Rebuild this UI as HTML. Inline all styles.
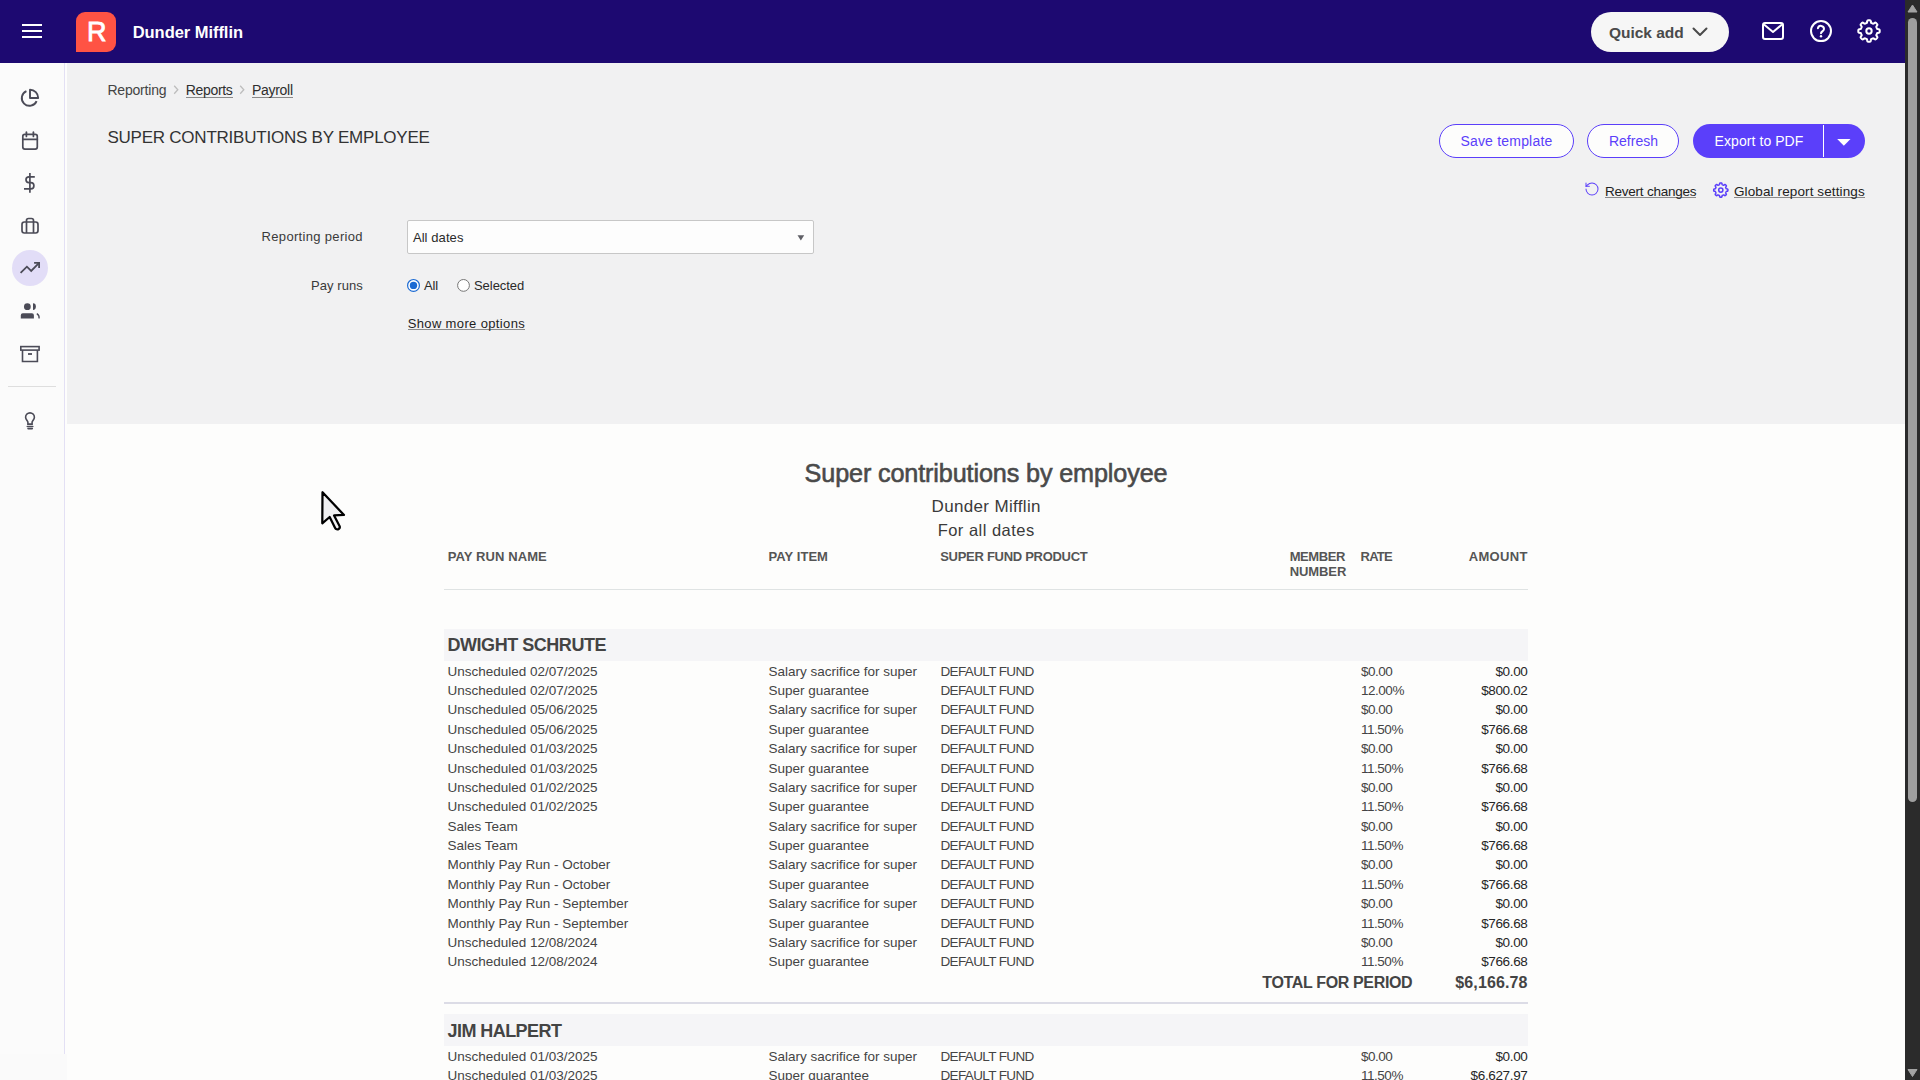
<!DOCTYPE html>
<html><head><meta charset="utf-8">
<style>
*{box-sizing:border-box}
html,body{margin:0;padding:0;width:1920px;height:1080px;overflow:hidden;background:#fdfdfc;font-family:"Liberation Sans",sans-serif;}
.a{position:absolute;white-space:nowrap;line-height:1}
.ic{position:absolute;display:block}
</style></head><body>
<div class="ic" style="left:0;top:0;width:1905px;height:63px;background:#1d0971"></div>
<div class="ic" style="left:22px;top:24px;width:20px;height:2px;background:#fff"></div>
<div class="ic" style="left:22px;top:30px;width:20px;height:2px;background:#fff"></div>
<div class="ic" style="left:22px;top:36px;width:20px;height:2px;background:#fff"></div>
<div class="ic" style="left:76px;top:12px;width:40px;height:40px;background:#ff5344;border-radius:9px 9px 9px 0"></div>
<div class="ic" style="left:1591px;top:12px;width:138px;height:40px;background:#f6f6f6;border-radius:20px"></div>
<svg class="ic" style="left:1690px;top:24px" width="20" height="16" viewBox="0 0 20 16"><polyline points="3.5,4.5 10,11 16.5,4.5" fill="none" stroke="#4a4a4a" stroke-width="2" stroke-linecap="round" stroke-linejoin="round"/></svg>
<svg class="ic" style="left:1760px;top:20px" width="26" height="22" viewBox="0 0 26 22"><rect x="3" y="3" width="20" height="16" rx="2" fill="none" stroke="#fff" stroke-width="2"/><polyline points="4,4.5 13,12 22,4.5" fill="none" stroke="#fff" stroke-width="2" stroke-linejoin="round"/></svg>
<svg class="ic" style="left:1807px;top:17px" width="28" height="28" viewBox="0 0 28 28"><circle cx="14" cy="14.1" r="10" fill="none" stroke="#fff" stroke-width="2"/><path d="M10.9 11.2a3.1 3.1 0 0 1 6.1 0.8c0 2.1-3 2.6-3 4.3" fill="none" stroke="#fff" stroke-width="2" stroke-linecap="round"/><circle cx="14" cy="19.2" r="1.2" fill="#fff"/></svg>
<svg class="ic" style="left:1855px;top:17px" width="28" height="28" viewBox="0 0 28 28"><path d="M14.00 3.30 L14.28 3.30 L14.56 3.32 L14.84 3.35 L15.11 3.40 L15.38 3.50 L15.62 3.75 L15.80 4.30 L15.90 5.07 L16.01 5.62 L16.18 5.88 L16.37 6.01 L16.57 6.09 L16.77 6.17 L16.97 6.25 L17.18 6.33 L17.38 6.42 L17.57 6.50 L17.77 6.59 L17.98 6.67 L18.20 6.72 L18.50 6.65 L18.97 6.34 L19.59 5.87 L20.10 5.60 L20.45 5.60 L20.71 5.71 L20.94 5.87 L21.16 6.05 L21.36 6.24 L21.57 6.43 L21.76 6.64 L21.95 6.84 L22.13 7.06 L22.29 7.29 L22.40 7.55 L22.40 7.90 L22.13 8.41 L21.66 9.03 L21.35 9.50 L21.28 9.80 L21.33 10.02 L21.41 10.23 L21.50 10.43 L21.58 10.62 L21.67 10.82 L21.75 11.03 L21.83 11.23 L21.91 11.43 L21.99 11.63 L22.12 11.82 L22.38 11.99 L22.93 12.10 L23.70 12.20 L24.25 12.38 L24.50 12.62 L24.60 12.89 L24.65 13.16 L24.68 13.44 L24.70 13.72 L24.70 14.00 L24.70 14.28 L24.68 14.56 L24.65 14.84 L24.60 15.11 L24.50 15.38 L24.25 15.62 L23.70 15.80 L22.93 15.90 L22.38 16.01 L22.12 16.18 L21.99 16.37 L21.91 16.57 L21.83 16.77 L21.75 16.97 L21.67 17.18 L21.58 17.38 L21.50 17.57 L21.41 17.77 L21.33 17.98 L21.28 18.20 L21.35 18.50 L21.66 18.97 L22.13 19.59 L22.40 20.10 L22.40 20.45 L22.29 20.71 L22.13 20.94 L21.95 21.16 L21.76 21.36 L21.57 21.57 L21.36 21.76 L21.16 21.95 L20.94 22.13 L20.71 22.29 L20.45 22.40 L20.10 22.40 L19.59 22.13 L18.97 21.66 L18.50 21.35 L18.20 21.28 L17.98 21.33 L17.77 21.41 L17.57 21.50 L17.38 21.58 L17.18 21.67 L16.97 21.75 L16.77 21.83 L16.57 21.91 L16.37 21.99 L16.18 22.12 L16.01 22.38 L15.90 22.93 L15.80 23.70 L15.62 24.25 L15.38 24.50 L15.11 24.60 L14.84 24.65 L14.56 24.68 L14.28 24.70 L14.00 24.70 L13.72 24.70 L13.44 24.68 L13.16 24.65 L12.89 24.60 L12.62 24.50 L12.38 24.25 L12.20 23.70 L12.10 22.93 L11.99 22.38 L11.82 22.12 L11.63 21.99 L11.43 21.91 L11.23 21.83 L11.03 21.75 L10.82 21.67 L10.62 21.58 L10.43 21.50 L10.23 21.41 L10.02 21.33 L9.80 21.28 L9.50 21.35 L9.03 21.66 L8.41 22.13 L7.90 22.40 L7.55 22.40 L7.29 22.29 L7.06 22.13 L6.84 21.95 L6.64 21.76 L6.43 21.57 L6.24 21.36 L6.05 21.16 L5.87 20.94 L5.71 20.71 L5.60 20.45 L5.60 20.10 L5.87 19.59 L6.34 18.97 L6.65 18.50 L6.72 18.20 L6.67 17.98 L6.59 17.77 L6.50 17.57 L6.42 17.38 L6.33 17.18 L6.25 16.97 L6.17 16.77 L6.09 16.57 L6.01 16.37 L5.88 16.18 L5.62 16.01 L5.07 15.90 L4.30 15.80 L3.75 15.62 L3.50 15.38 L3.40 15.11 L3.35 14.84 L3.32 14.56 L3.30 14.28 L3.30 14.00 L3.30 13.72 L3.32 13.44 L3.35 13.16 L3.40 12.89 L3.50 12.62 L3.75 12.38 L4.30 12.20 L5.07 12.10 L5.62 11.99 L5.88 11.82 L6.01 11.63 L6.09 11.43 L6.17 11.23 L6.25 11.03 L6.33 10.82 L6.42 10.62 L6.50 10.43 L6.59 10.23 L6.67 10.02 L6.72 9.80 L6.65 9.50 L6.34 9.03 L5.87 8.41 L5.60 7.90 L5.60 7.55 L5.71 7.29 L5.87 7.06 L6.05 6.84 L6.24 6.64 L6.43 6.43 L6.64 6.24 L6.84 6.05 L7.06 5.87 L7.29 5.71 L7.55 5.60 L7.90 5.60 L8.41 5.87 L9.03 6.34 L9.50 6.65 L9.80 6.72 L10.02 6.67 L10.23 6.59 L10.43 6.50 L10.62 6.42 L10.82 6.33 L11.03 6.25 L11.23 6.17 L11.43 6.09 L11.63 6.01 L11.82 5.88 L11.99 5.62 L12.10 5.07 L12.20 4.30 L12.38 3.75 L12.62 3.50 L12.89 3.40 L13.16 3.35 L13.44 3.32 L13.72 3.30Z" fill="none" stroke="#fff" stroke-width="2" stroke-linejoin="round"/><circle cx="14" cy="14" r="2.7" fill="none" stroke="#fff" stroke-width="2"/></svg>
<div class="ic" style="left:0;top:63px;width:65px;height:991px;background:#fbfbfb;border-right:1px solid #e3e0f4"></div>
<div class="ic" style="left:0;top:1054px;width:67px;height:26px;background:#fafafa"></div>
<div class="ic" style="left:67px;top:63px;width:1838px;height:361px;background:#f1f1f2"></div>
<svg class="ic" style="left:17px;top:85px" width="26" height="26" viewBox="0 0 26 26"><g fill="none" stroke="#4b4b57" stroke-width="1.9" stroke-linejoin="round"><path d="M19.59 16.1A7.7 7.7 0 1 1 9.42 6.04"/><path d="M21.2 13A8.2 8.2 0 0 0 13 4.8V13z"/></g></svg>
<svg class="ic" style="left:17px;top:128px" width="26" height="26" viewBox="0 0 26 26"><g fill="none" stroke="#4b4b57" stroke-width="1.7" stroke-linecap="round"><rect x="5.8" y="6.4" width="14.5" height="14.7" rx="2"/><line x1="5.8" y1="11.4" x2="20.3" y2="11.4"/><line x1="9.4" y1="4.2" x2="9.4" y2="8.4"/><line x1="16.4" y1="4.2" x2="16.4" y2="8.4"/></g></svg>
<svg class="ic" style="left:17px;top:170px" width="26" height="26" viewBox="0 0 26 26"><g fill="none" stroke="#4b4b57" stroke-width="1.7"><line x1="12.9" y1="3" x2="12.9" y2="22.7"/><path d="M17.8 6.9H12a3 2.85 0 0 0 0 5.7h1.8a3.1 3.1 0 0 1 0 6.2H7"/></g></svg>
<svg class="ic" style="left:17px;top:213px" width="26" height="26" viewBox="0 0 26 26"><g fill="none" stroke="#4b4b57" stroke-width="1.7"><rect x="5" y="9" width="16" height="11" rx="2.4"/><path d="M9.5 20V7.5a2 2 0 0 1 2-2h3a2 2 0 0 1 2 2V20"/></g></svg>
<div class="ic" style="left:12px;top:250px;width:36px;height:36px;border-radius:50%;background:#e2ddf7"></div>
<svg class="ic" style="left:17px;top:255px" width="26" height="26" viewBox="0 0 26 26"><g fill="none" stroke="#4b4b57" stroke-width="1.8" stroke-linejoin="miter"><polyline points="3.6,17.9 9.9,11.7 14.2,15.9 22.1,7.9"/><polyline points="17.1,7.9 22.1,7.9 22.1,13.1"/></g></svg>
<svg class="ic" style="left:17px;top:298px" width="26" height="26" viewBox="0 0 26 26"><g fill="#4b4b57"><circle cx="10.35" cy="8.7" r="3.4"/><path d="M16 5.2a2.9 3.4 0 0 1 0 6.8z"/><path d="M3.8 20.5v-3.3a2 2 0 0 1 2-2h9.1a2 2 0 0 1 2 2v3.3z"/></g><path d="M19.8 15.6a5 5 0 0 1 2.3 4.9" fill="none" stroke="#4b4b57" stroke-width="1.3"/></svg>
<svg class="ic" style="left:17px;top:341px" width="26" height="26" viewBox="0 0 26 26"><g fill="none" stroke="#4b4b57" stroke-width="1.6"><rect x="3.8" y="5.6" width="18.3" height="3.5"/><path d="M5.5 9.1V20.5h14.9V9.1"/><line x1="11" y1="13" x2="15" y2="13" stroke-width="1.8"/></g></svg>
<div class="ic" style="left:8px;top:386px;width:48px;height:1px;background:#dedede"></div>
<svg class="ic" style="left:17px;top:407px" width="26" height="26" viewBox="0 0 26 26"><g fill="none" stroke="#4b4b57" stroke-width="1.6" stroke-linecap="round"><path d="M10.9 17.1v-1.9c0-1.2-2.3-2.7-2.3-4.9a4.4 4.4 0 0 1 8.8 0c0 2.2-2.3 3.7-2.3 4.9v1.9z"/><line x1="10.3" y1="19.5" x2="15.8" y2="19.5"/><line x1="11" y1="21.6" x2="15.3" y2="21.6"/></g></svg>
<div class="ic" style="left:1905px;top:0;width:15px;height:1080px;background:#2b2b2b"></div>
<div class="ic" style="left:1908px;top:18px;width:9px;height:784px;border-radius:4.5px;background:#9f9f9f"></div>
<svg class="ic" style="left:1905px;top:0" width="15" height="17" viewBox="0 0 15 17"><path d="M3 12L7.5 5L12 12z" fill="#a3a3a3" stroke="#a3a3a3" stroke-width="1" stroke-linejoin="round"/></svg>
<svg class="ic" style="left:1905px;top:1063px" width="15" height="17" viewBox="0 0 15 17"><path d="M3 6.5L7.5 13.5L12 6.5z" fill="#a3a3a3" stroke="#a3a3a3" stroke-width="1" stroke-linejoin="round"/></svg>
<svg class="ic" style="left:171px;top:83px" width="10" height="14" viewBox="0 0 10 14"><polyline points="3.2,2.8 6.8,6.8 3.2,10.8" fill="none" stroke="#bdbdbd" stroke-width="1.3"/></svg>
<div class="ic" style="left:185.5px;top:96.5px;width:47px;height:1px;background:#8a8a8a"></div>
<svg class="ic" style="left:237px;top:83px" width="10" height="14" viewBox="0 0 10 14"><polyline points="3.2,2.8 6.8,6.8 3.2,10.8" fill="none" stroke="#bdbdbd" stroke-width="1.3"/></svg>
<div class="ic" style="left:252px;top:96.5px;width:41px;height:1px;background:#8a8a8a"></div>
<div class="ic" style="left:1439px;top:124px;width:135px;height:34px;border:1.5px solid #5b3ffa;border-radius:17px;background:#fdfdfc"></div>
<div class="ic" style="left:1587px;top:124px;width:92px;height:34px;border:1.5px solid #5b3ffa;border-radius:17px;background:#fdfdfc"></div>
<div class="ic" style="left:1693px;top:124px;width:172px;height:34px;border-radius:17px;background:#5b3ffa"></div>
<div class="ic" style="left:1823px;top:125px;width:1.3px;height:32px;background:#fff"></div>
<svg class="ic" style="left:1835px;top:137px" width="17" height="11" viewBox="0 0 17 11"><path d="M2.2 2.1H15.5L8.85 8.8z" fill="#fff"/></svg>
<svg class="ic" style="left:1584px;top:181px" width="16" height="16" viewBox="0 0 16 16"><g fill="none" stroke="#5b3ffa" stroke-width="1.5" stroke-linecap="round" stroke-linejoin="round" transform="scale(0.6667)"><path d="M3 12a9 9 0 1 0 9-9 9.75 9.75 0 0 0-6.74 2.74L3 8"/><path d="M3 3v5h5"/></g></svg>
<div class="ic" style="left:1605px;top:197px;width:91.3px;height:1px;background:#8a8a8a"></div>
<svg class="ic" style="left:1710px;top:179px" width="22" height="22" viewBox="0 0 22 22"><path d="M10.80 4.00 L10.99 4.00 L11.17 4.01 L11.36 4.03 L11.54 4.06 L11.72 4.13 L11.88 4.30 L11.99 4.67 L12.06 5.18 L12.13 5.54 L12.24 5.72 L12.37 5.80 L12.50 5.86 L12.64 5.91 L12.77 5.96 L12.90 6.02 L13.04 6.07 L13.17 6.13 L13.30 6.19 L13.44 6.24 L13.59 6.27 L13.79 6.23 L14.10 6.02 L14.51 5.71 L14.85 5.53 L15.08 5.52 L15.25 5.60 L15.41 5.71 L15.55 5.83 L15.69 5.95 L15.82 6.08 L15.95 6.21 L16.07 6.35 L16.19 6.49 L16.30 6.65 L16.38 6.82 L16.37 7.05 L16.19 7.39 L15.88 7.80 L15.67 8.11 L15.63 8.31 L15.66 8.46 L15.71 8.60 L15.77 8.73 L15.83 8.86 L15.88 9.00 L15.94 9.13 L15.99 9.26 L16.04 9.40 L16.10 9.53 L16.18 9.66 L16.36 9.77 L16.72 9.84 L17.23 9.91 L17.60 10.02 L17.77 10.18 L17.84 10.36 L17.87 10.54 L17.89 10.73 L17.90 10.91 L17.90 11.10 L17.90 11.29 L17.89 11.47 L17.87 11.66 L17.84 11.84 L17.77 12.02 L17.60 12.18 L17.23 12.29 L16.72 12.36 L16.36 12.43 L16.18 12.54 L16.10 12.67 L16.04 12.80 L15.99 12.94 L15.94 13.07 L15.88 13.20 L15.83 13.34 L15.77 13.47 L15.71 13.60 L15.66 13.74 L15.63 13.89 L15.67 14.09 L15.88 14.40 L16.19 14.81 L16.37 15.15 L16.38 15.38 L16.30 15.55 L16.19 15.71 L16.07 15.85 L15.95 15.99 L15.82 16.12 L15.69 16.25 L15.55 16.37 L15.41 16.49 L15.25 16.60 L15.08 16.68 L14.85 16.67 L14.51 16.49 L14.10 16.18 L13.79 15.97 L13.59 15.93 L13.44 15.96 L13.30 16.01 L13.17 16.07 L13.04 16.13 L12.90 16.18 L12.77 16.24 L12.64 16.29 L12.50 16.34 L12.37 16.40 L12.24 16.48 L12.13 16.66 L12.06 17.02 L11.99 17.53 L11.88 17.90 L11.72 18.07 L11.54 18.14 L11.36 18.17 L11.17 18.19 L10.99 18.20 L10.80 18.20 L10.61 18.20 L10.43 18.19 L10.24 18.17 L10.06 18.14 L9.88 18.07 L9.72 17.90 L9.61 17.53 L9.54 17.02 L9.47 16.66 L9.36 16.48 L9.23 16.40 L9.10 16.34 L8.96 16.29 L8.83 16.24 L8.70 16.18 L8.56 16.13 L8.43 16.07 L8.30 16.01 L8.16 15.96 L8.01 15.93 L7.81 15.97 L7.50 16.18 L7.09 16.49 L6.75 16.67 L6.52 16.68 L6.35 16.60 L6.19 16.49 L6.05 16.37 L5.91 16.25 L5.78 16.12 L5.65 15.99 L5.53 15.85 L5.41 15.71 L5.30 15.55 L5.22 15.38 L5.23 15.15 L5.41 14.81 L5.72 14.40 L5.93 14.09 L5.97 13.89 L5.94 13.74 L5.89 13.60 L5.83 13.47 L5.77 13.34 L5.72 13.20 L5.66 13.07 L5.61 12.94 L5.56 12.80 L5.50 12.67 L5.42 12.54 L5.24 12.43 L4.88 12.36 L4.37 12.29 L4.00 12.18 L3.83 12.02 L3.76 11.84 L3.73 11.66 L3.71 11.47 L3.70 11.29 L3.70 11.10 L3.70 10.91 L3.71 10.73 L3.73 10.54 L3.76 10.36 L3.83 10.18 L4.00 10.02 L4.37 9.91 L4.88 9.84 L5.24 9.77 L5.42 9.66 L5.50 9.53 L5.56 9.40 L5.61 9.26 L5.66 9.13 L5.72 9.00 L5.77 8.86 L5.83 8.73 L5.89 8.60 L5.94 8.46 L5.97 8.31 L5.93 8.11 L5.72 7.80 L5.41 7.39 L5.23 7.05 L5.22 6.82 L5.30 6.65 L5.41 6.49 L5.53 6.35 L5.65 6.21 L5.78 6.08 L5.91 5.95 L6.05 5.83 L6.19 5.71 L6.35 5.60 L6.52 5.52 L6.75 5.53 L7.09 5.71 L7.50 6.02 L7.81 6.23 L8.01 6.27 L8.16 6.24 L8.30 6.19 L8.43 6.13 L8.56 6.07 L8.70 6.02 L8.83 5.96 L8.96 5.91 L9.10 5.86 L9.23 5.80 L9.36 5.72 L9.47 5.54 L9.54 5.18 L9.61 4.67 L9.72 4.30 L9.88 4.13 L10.06 4.06 L10.24 4.03 L10.43 4.01 L10.61 4.00Z" fill="none" stroke="#5b3ffa" stroke-width="1.5" stroke-linejoin="round"/><circle cx="10.8" cy="11.1" r="2.1" fill="none" stroke="#5b3ffa" stroke-width="1.5"/></svg>
<div class="ic" style="left:1734px;top:197px;width:130.8px;height:1px;background:#8a8a8a"></div>
<div class="ic" style="left:407px;top:220px;width:407px;height:34px;background:#fdfdfd;border:1px solid #c7c7c7;border-radius:2px"></div>
<svg class="ic" style="left:795px;top:232px" width="12" height="12" viewBox="0 0 12 12"><path d="M2.5 3.2H9.2L5.85 8.6z" fill="#5f5f66"/></svg>
<svg class="ic" style="left:406px;top:278px" width="15" height="15" viewBox="0 0 15 15"><circle cx="7.5" cy="7.4" r="5.9" fill="#fff" stroke="#1b6ad3" stroke-width="1.2"/><circle cx="7.5" cy="7.4" r="3.7" fill="#1b6ad3"/></svg>
<svg class="ic" style="left:456px;top:278px" width="15" height="15" viewBox="0 0 15 15"><circle cx="7.5" cy="7.4" r="5.9" fill="#fff" stroke="#767676" stroke-width="1"/></svg>
<div class="ic" style="left:407.7px;top:329px;width:117.4px;height:1px;background:#8a8a8a"></div>
<div class="ic" style="left:444px;top:589px;width:1084px;height:1px;background:#dfe3e3"></div>
<div class="ic" style="left:444px;top:629px;width:1084px;height:32px;background:#f5f5f7"></div>
<div class="ic" style="left:444px;top:1002px;width:1084px;height:2px;background:#dcdce6"></div>
<div class="ic" style="left:444px;top:1014px;width:1084px;height:32px;background:#f5f5f7"></div>
<div class="a" style="left:87.00px;top:18.74px;font-size:27px;color:#fff;letter-spacing:-2.900px;-webkit-text-stroke:0.8px #fff;">R</div>
<div class="a" style="left:132.70px;top:24.23px;font-size:16.5px;color:#fff;font-weight:700;letter-spacing:-0.043px;">Dunder Mifflin</div>
<div class="a" style="left:1609.00px;top:24.58px;font-size:15.5px;color:#4a4a4a;font-weight:700;letter-spacing:-0.026px;">Quick add</div>
<div class="a" style="left:107.40px;top:83.45px;font-size:14px;color:#444;letter-spacing:-0.189px;">Reporting</div>
<div class="a" style="left:185.70px;top:83.45px;font-size:14px;color:#2e2e2e;letter-spacing:-0.319px;">Reports</div>
<div class="a" style="left:252.00px;top:83.45px;font-size:14px;color:#2e2e2e;letter-spacing:-0.300px;">Payroll</div>
<div class="a" style="left:107.40px;top:128.91px;font-size:17px;color:#333;letter-spacing:-0.228px;">SUPER CONTRIBUTIONS BY EMPLOYEE</div>
<div class="a" style="left:1460.40px;top:134.05px;font-size:14px;color:#5b3ffa;letter-spacing:0.200px;">Save template</div>
<div class="a" style="left:1608.90px;top:134.05px;font-size:14px;color:#5b3ffa;letter-spacing:0.038px;">Refresh</div>
<div class="a" style="left:1714.60px;top:133.95px;font-size:14px;color:#fff;letter-spacing:0.068px;">Export to PDF</div>
<div class="a" style="left:1605.00px;top:184.87px;font-size:13.5px;color:#222;letter-spacing:-0.233px;">Revert changes</div>
<div class="a" style="left:1734.00px;top:184.87px;font-size:13.5px;color:#222;letter-spacing:0.112px;">Global report settings</div>
<div class="a" style="left:261.60px;top:229.90px;font-size:13px;color:#3a3a3a;letter-spacing:0.323px;">Reporting period</div>
<div class="a" style="left:412.90px;top:230.70px;font-size:13px;color:#2a2a2a;letter-spacing:0.081px;">All dates</div>
<div class="a" style="left:311.00px;top:278.80px;font-size:13px;color:#3a3a3a;letter-spacing:0.061px;">Pay runs</div>
<div class="a" style="left:424.00px;top:278.70px;font-size:13px;color:#2a2a2a;letter-spacing:-0.184px;">All</div>
<div class="a" style="left:474.00px;top:278.70px;font-size:13px;color:#2a2a2a;letter-spacing:-0.049px;">Selected</div>
<div class="a" style="left:407.70px;top:316.90px;font-size:13px;color:#1e1e1e;letter-spacing:0.360px;">Show more options</div>
<div class="a" style="left:804.60px;top:460.77px;font-size:25.2px;color:#4a4a4a;letter-spacing:-0.130px;-webkit-text-stroke:0.6px #4a4a4a;">Super contributions by employee</div>
<div class="a" style="left:931.55px;top:497.61px;font-size:17px;color:#3a3a3a;letter-spacing:0.337px;">Dunder Mifflin</div>
<div class="a" style="left:937.65px;top:521.73px;font-size:16.5px;color:#3a3a3a;letter-spacing:0.485px;">For all dates</div>
<div class="a" style="left:447.70px;top:550.25px;font-size:13px;color:#555;font-weight:700;letter-spacing:0.099px;">PAY RUN NAME</div>
<div class="a" style="left:768.60px;top:550.25px;font-size:13px;color:#555;font-weight:700;letter-spacing:0.048px;">PAY ITEM</div>
<div class="a" style="left:940.20px;top:550.25px;font-size:13px;color:#555;font-weight:700;letter-spacing:-0.284px;">SUPER FUND PRODUCT</div>
<div class="a" style="left:1289.70px;top:549.80px;font-size:13px;color:#555;font-weight:700;letter-spacing:-0.414px;">MEMBER</div>
<div class="a" style="left:1289.70px;top:564.60px;font-size:13px;color:#555;font-weight:700;letter-spacing:-0.094px;">NUMBER</div>
<div class="a" style="left:1360.60px;top:550.25px;font-size:13px;color:#555;font-weight:700;letter-spacing:-0.809px;">RATE</div>
<div class="a" style="left:1468.70px;top:550.25px;font-size:13px;color:#555;font-weight:700;letter-spacing:0.342px;">AMOUNT</div>
<div class="a" style="left:447.50px;top:635.66px;font-size:18px;color:#444;font-weight:700;letter-spacing:-0.464px;">DWIGHT SCHRUTE</div>
<div class="a" style="left:447.40px;top:664.57px;font-size:13.5px;color:#444;">Unscheduled 02/07/2025</div>
<div class="a" style="left:768.50px;top:664.57px;font-size:13.5px;color:#444;">Salary sacrifice for super</div>
<div class="a" style="left:940.50px;top:664.57px;font-size:13.5px;color:#444;letter-spacing:-0.630px;">DEFAULT FUND</div>
<div class="a" style="left:1360.90px;top:664.57px;font-size:13.5px;color:#444;letter-spacing:-0.45px;">$0.00</div>
<div class="a" style="right:392.50px;top:664.57px;font-size:13.5px;color:#262626;letter-spacing:-0.35px;">$0.00</div>
<div class="a" style="left:447.40px;top:683.96px;font-size:13.5px;color:#444;">Unscheduled 02/07/2025</div>
<div class="a" style="left:768.50px;top:683.96px;font-size:13.5px;color:#444;">Super guarantee</div>
<div class="a" style="left:940.50px;top:683.96px;font-size:13.5px;color:#444;letter-spacing:-0.630px;">DEFAULT FUND</div>
<div class="a" style="left:1360.90px;top:683.96px;font-size:13.5px;color:#444;letter-spacing:-0.45px;">12.00%</div>
<div class="a" style="right:392.50px;top:683.96px;font-size:13.5px;color:#262626;letter-spacing:-0.35px;">$800.02</div>
<div class="a" style="left:447.40px;top:703.35px;font-size:13.5px;color:#444;">Unscheduled 05/06/2025</div>
<div class="a" style="left:768.50px;top:703.35px;font-size:13.5px;color:#444;">Salary sacrifice for super</div>
<div class="a" style="left:940.50px;top:703.35px;font-size:13.5px;color:#444;letter-spacing:-0.630px;">DEFAULT FUND</div>
<div class="a" style="left:1360.90px;top:703.35px;font-size:13.5px;color:#444;letter-spacing:-0.45px;">$0.00</div>
<div class="a" style="right:392.50px;top:703.35px;font-size:13.5px;color:#262626;letter-spacing:-0.35px;">$0.00</div>
<div class="a" style="left:447.40px;top:722.74px;font-size:13.5px;color:#444;">Unscheduled 05/06/2025</div>
<div class="a" style="left:768.50px;top:722.74px;font-size:13.5px;color:#444;">Super guarantee</div>
<div class="a" style="left:940.50px;top:722.74px;font-size:13.5px;color:#444;letter-spacing:-0.630px;">DEFAULT FUND</div>
<div class="a" style="left:1360.90px;top:722.74px;font-size:13.5px;color:#444;letter-spacing:-0.45px;">11.50%</div>
<div class="a" style="right:392.50px;top:722.74px;font-size:13.5px;color:#262626;letter-spacing:-0.35px;">$766.68</div>
<div class="a" style="left:447.40px;top:742.13px;font-size:13.5px;color:#444;">Unscheduled 01/03/2025</div>
<div class="a" style="left:768.50px;top:742.13px;font-size:13.5px;color:#444;">Salary sacrifice for super</div>
<div class="a" style="left:940.50px;top:742.13px;font-size:13.5px;color:#444;letter-spacing:-0.630px;">DEFAULT FUND</div>
<div class="a" style="left:1360.90px;top:742.13px;font-size:13.5px;color:#444;letter-spacing:-0.45px;">$0.00</div>
<div class="a" style="right:392.50px;top:742.13px;font-size:13.5px;color:#262626;letter-spacing:-0.35px;">$0.00</div>
<div class="a" style="left:447.40px;top:761.52px;font-size:13.5px;color:#444;">Unscheduled 01/03/2025</div>
<div class="a" style="left:768.50px;top:761.52px;font-size:13.5px;color:#444;">Super guarantee</div>
<div class="a" style="left:940.50px;top:761.52px;font-size:13.5px;color:#444;letter-spacing:-0.630px;">DEFAULT FUND</div>
<div class="a" style="left:1360.90px;top:761.52px;font-size:13.5px;color:#444;letter-spacing:-0.45px;">11.50%</div>
<div class="a" style="right:392.50px;top:761.52px;font-size:13.5px;color:#262626;letter-spacing:-0.35px;">$766.68</div>
<div class="a" style="left:447.40px;top:780.91px;font-size:13.5px;color:#444;">Unscheduled 01/02/2025</div>
<div class="a" style="left:768.50px;top:780.91px;font-size:13.5px;color:#444;">Salary sacrifice for super</div>
<div class="a" style="left:940.50px;top:780.91px;font-size:13.5px;color:#444;letter-spacing:-0.630px;">DEFAULT FUND</div>
<div class="a" style="left:1360.90px;top:780.91px;font-size:13.5px;color:#444;letter-spacing:-0.45px;">$0.00</div>
<div class="a" style="right:392.50px;top:780.91px;font-size:13.5px;color:#262626;letter-spacing:-0.35px;">$0.00</div>
<div class="a" style="left:447.40px;top:800.30px;font-size:13.5px;color:#444;">Unscheduled 01/02/2025</div>
<div class="a" style="left:768.50px;top:800.30px;font-size:13.5px;color:#444;">Super guarantee</div>
<div class="a" style="left:940.50px;top:800.30px;font-size:13.5px;color:#444;letter-spacing:-0.630px;">DEFAULT FUND</div>
<div class="a" style="left:1360.90px;top:800.30px;font-size:13.5px;color:#444;letter-spacing:-0.45px;">11.50%</div>
<div class="a" style="right:392.50px;top:800.30px;font-size:13.5px;color:#262626;letter-spacing:-0.35px;">$766.68</div>
<div class="a" style="left:447.40px;top:819.69px;font-size:13.5px;color:#444;">Sales Team</div>
<div class="a" style="left:768.50px;top:819.69px;font-size:13.5px;color:#444;">Salary sacrifice for super</div>
<div class="a" style="left:940.50px;top:819.69px;font-size:13.5px;color:#444;letter-spacing:-0.630px;">DEFAULT FUND</div>
<div class="a" style="left:1360.90px;top:819.69px;font-size:13.5px;color:#444;letter-spacing:-0.45px;">$0.00</div>
<div class="a" style="right:392.50px;top:819.69px;font-size:13.5px;color:#262626;letter-spacing:-0.35px;">$0.00</div>
<div class="a" style="left:447.40px;top:839.08px;font-size:13.5px;color:#444;">Sales Team</div>
<div class="a" style="left:768.50px;top:839.08px;font-size:13.5px;color:#444;">Super guarantee</div>
<div class="a" style="left:940.50px;top:839.08px;font-size:13.5px;color:#444;letter-spacing:-0.630px;">DEFAULT FUND</div>
<div class="a" style="left:1360.90px;top:839.08px;font-size:13.5px;color:#444;letter-spacing:-0.45px;">11.50%</div>
<div class="a" style="right:392.50px;top:839.08px;font-size:13.5px;color:#262626;letter-spacing:-0.35px;">$766.68</div>
<div class="a" style="left:447.40px;top:858.47px;font-size:13.5px;color:#444;">Monthly Pay Run - October</div>
<div class="a" style="left:768.50px;top:858.47px;font-size:13.5px;color:#444;">Salary sacrifice for super</div>
<div class="a" style="left:940.50px;top:858.47px;font-size:13.5px;color:#444;letter-spacing:-0.630px;">DEFAULT FUND</div>
<div class="a" style="left:1360.90px;top:858.47px;font-size:13.5px;color:#444;letter-spacing:-0.45px;">$0.00</div>
<div class="a" style="right:392.50px;top:858.47px;font-size:13.5px;color:#262626;letter-spacing:-0.35px;">$0.00</div>
<div class="a" style="left:447.40px;top:877.86px;font-size:13.5px;color:#444;">Monthly Pay Run - October</div>
<div class="a" style="left:768.50px;top:877.86px;font-size:13.5px;color:#444;">Super guarantee</div>
<div class="a" style="left:940.50px;top:877.86px;font-size:13.5px;color:#444;letter-spacing:-0.630px;">DEFAULT FUND</div>
<div class="a" style="left:1360.90px;top:877.86px;font-size:13.5px;color:#444;letter-spacing:-0.45px;">11.50%</div>
<div class="a" style="right:392.50px;top:877.86px;font-size:13.5px;color:#262626;letter-spacing:-0.35px;">$766.68</div>
<div class="a" style="left:447.40px;top:897.25px;font-size:13.5px;color:#444;">Monthly Pay Run - September</div>
<div class="a" style="left:768.50px;top:897.25px;font-size:13.5px;color:#444;">Salary sacrifice for super</div>
<div class="a" style="left:940.50px;top:897.25px;font-size:13.5px;color:#444;letter-spacing:-0.630px;">DEFAULT FUND</div>
<div class="a" style="left:1360.90px;top:897.25px;font-size:13.5px;color:#444;letter-spacing:-0.45px;">$0.00</div>
<div class="a" style="right:392.50px;top:897.25px;font-size:13.5px;color:#262626;letter-spacing:-0.35px;">$0.00</div>
<div class="a" style="left:447.40px;top:916.64px;font-size:13.5px;color:#444;">Monthly Pay Run - September</div>
<div class="a" style="left:768.50px;top:916.64px;font-size:13.5px;color:#444;">Super guarantee</div>
<div class="a" style="left:940.50px;top:916.64px;font-size:13.5px;color:#444;letter-spacing:-0.630px;">DEFAULT FUND</div>
<div class="a" style="left:1360.90px;top:916.64px;font-size:13.5px;color:#444;letter-spacing:-0.45px;">11.50%</div>
<div class="a" style="right:392.50px;top:916.64px;font-size:13.5px;color:#262626;letter-spacing:-0.35px;">$766.68</div>
<div class="a" style="left:447.40px;top:936.03px;font-size:13.5px;color:#444;">Unscheduled 12/08/2024</div>
<div class="a" style="left:768.50px;top:936.03px;font-size:13.5px;color:#444;">Salary sacrifice for super</div>
<div class="a" style="left:940.50px;top:936.03px;font-size:13.5px;color:#444;letter-spacing:-0.630px;">DEFAULT FUND</div>
<div class="a" style="left:1360.90px;top:936.03px;font-size:13.5px;color:#444;letter-spacing:-0.45px;">$0.00</div>
<div class="a" style="right:392.50px;top:936.03px;font-size:13.5px;color:#262626;letter-spacing:-0.35px;">$0.00</div>
<div class="a" style="left:447.40px;top:955.42px;font-size:13.5px;color:#444;">Unscheduled 12/08/2024</div>
<div class="a" style="left:768.50px;top:955.42px;font-size:13.5px;color:#444;">Super guarantee</div>
<div class="a" style="left:940.50px;top:955.42px;font-size:13.5px;color:#444;letter-spacing:-0.630px;">DEFAULT FUND</div>
<div class="a" style="left:1360.90px;top:955.42px;font-size:13.5px;color:#444;letter-spacing:-0.45px;">11.50%</div>
<div class="a" style="right:392.50px;top:955.42px;font-size:13.5px;color:#262626;letter-spacing:-0.35px;">$766.68</div>
<div class="a" style="left:1262.30px;top:975.06px;font-size:16px;color:#444;font-weight:700;letter-spacing:-0.348px;">TOTAL FOR PERIOD</div>
<div class="a" style="left:1455.30px;top:975.06px;font-size:16px;color:#444;font-weight:700;letter-spacing:0.113px;">$6,166.78</div>
<div class="a" style="left:447.50px;top:1021.76px;font-size:18px;color:#444;font-weight:700;letter-spacing:-0.556px;">JIM HALPERT</div>
<div class="a" style="left:447.40px;top:1049.77px;font-size:13.5px;color:#444;">Unscheduled 01/03/2025</div>
<div class="a" style="left:768.50px;top:1049.77px;font-size:13.5px;color:#444;">Salary sacrifice for super</div>
<div class="a" style="left:940.50px;top:1049.77px;font-size:13.5px;color:#444;letter-spacing:-0.630px;">DEFAULT FUND</div>
<div class="a" style="left:1360.90px;top:1049.77px;font-size:13.5px;color:#444;letter-spacing:-0.45px;">$0.00</div>
<div class="a" style="right:392.50px;top:1049.77px;font-size:13.5px;color:#262626;letter-spacing:-0.35px;">$0.00</div>
<div class="a" style="left:447.40px;top:1069.16px;font-size:13.5px;color:#444;">Unscheduled 01/03/2025</div>
<div class="a" style="left:768.50px;top:1069.16px;font-size:13.5px;color:#444;">Super guarantee</div>
<div class="a" style="left:940.50px;top:1069.16px;font-size:13.5px;color:#444;letter-spacing:-0.630px;">DEFAULT FUND</div>
<div class="a" style="left:1360.90px;top:1069.16px;font-size:13.5px;color:#444;letter-spacing:-0.45px;">11.50%</div>
<div class="a" style="right:392.50px;top:1069.16px;font-size:13.5px;color:#262626;letter-spacing:-0.35px;">$6,627.97</div>
<svg class="ic" style="left:317px;top:488px" width="40" height="50" viewBox="0 0 40 50"><g transform="translate(5.5 4.3) scale(1.07) translate(-5.5 -4.3)"><path d="M5.5 4.3L5.3 33.3L12.2 27.4L17.3 37.7C17.9 38.9 19.5 39.3 20.6 38.6C21.6 37.9 21.9 36.6 21.3 35.5L16.3 25.9L25.6 25.5z" fill="#f0f0f1" stroke="#000" stroke-width="2.1" stroke-linejoin="round"/></g></svg>
</body></html>
